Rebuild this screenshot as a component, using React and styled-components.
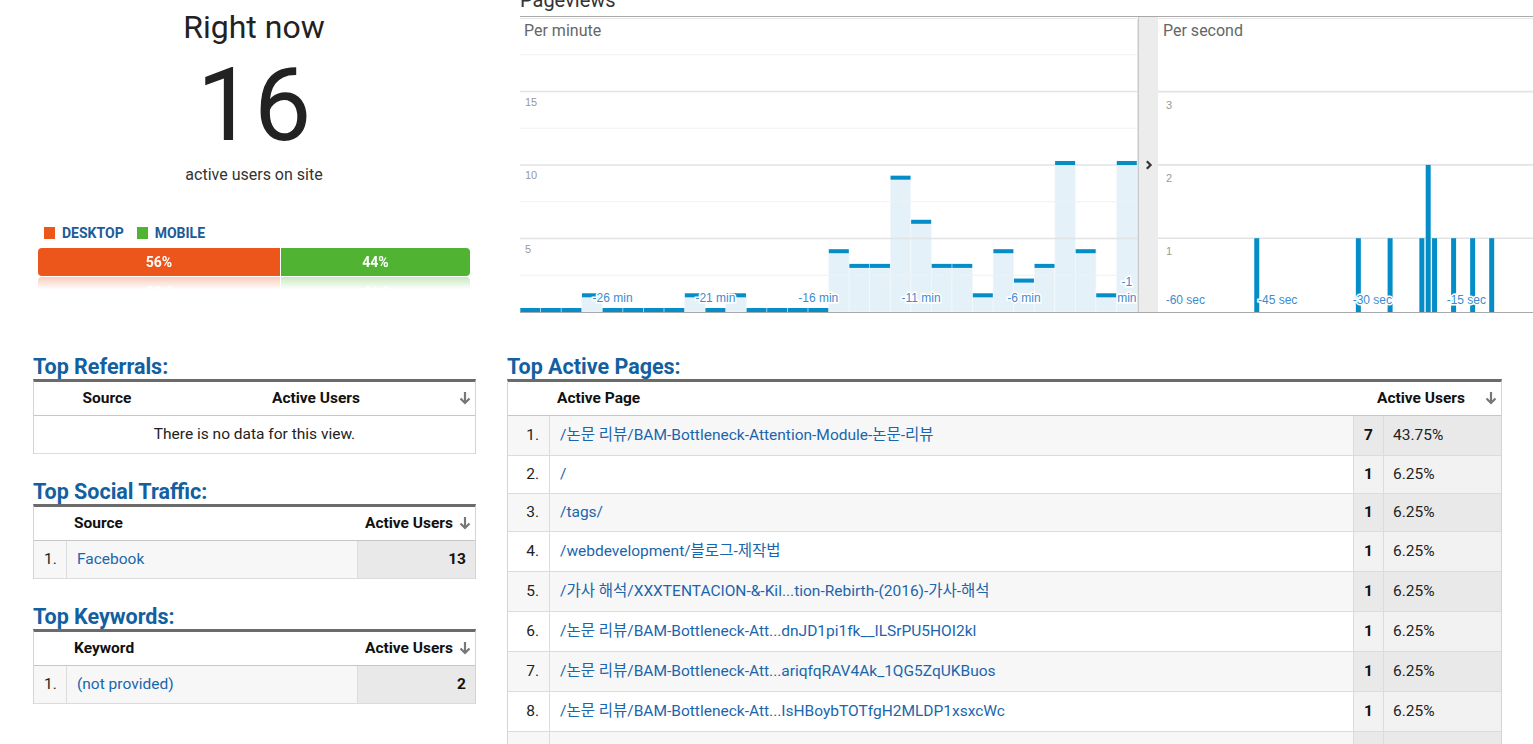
import React from 'react';
import styled, { createGlobalStyle } from 'styled-components';

const BLUE = '#058dc7';

const GlobalStyle = createGlobalStyle`
  html, body {
    margin: 0;
    padding: 0;
    overflow: hidden;
    background: #fff;
  }
  body {
    font-family: Roboto, 'Noto Sans CJK KR', sans-serif;
    color: #222;
  }
`;

const Page = styled.div`
  width: 1533px;
`;

const TopRow = styled.div`
  display: flex;
`;

const Overview = styled.section`
  width: 508px;
  display: flex;
  flex-direction: column;
  align-items: center;
`;

const Headline = styled.h1`
  margin: 8px 0 0;
  font-size: 32px;
  line-height: 38px;
  font-weight: 400;
  color: #222;
`;

const BigCount = styled.div`
  margin-top: 8px;
  font-size: 102px;
  line-height: 102px;
  color: #222;
`;

const Caption = styled.div`
  margin-top: 9px;
  font-size: 16px;
  line-height: 20px;
  color: #333;
`;

const Breakdown = styled.div`
  margin-top: 40px;
  width: 432px;
`;

const Legend = styled.div`
  display: flex;
  gap: 13px;
  padding-left: 6px;
`;

const LegendItem = styled.span`
  display: flex;
  align-items: center;
  gap: 7px;
  font-size: 14px;
  line-height: 16px;
  font-weight: 700;
  color: #1b5c99;
  &::before {
    content: '';
    width: 11px;
    height: 12px;
    background: ${p => p.$color};
  }
`;

const SplitBar = styled.div`
  display: flex;
  margin-top: 7px;
  height: 28px;
  border-radius: 4px;
  overflow: hidden;
  -webkit-box-reflect: below 1px linear-gradient(transparent 55%, rgba(255, 255, 255, 0.3));
`;

const Segment = styled.div`
  flex: 0 0 ${p => p.$share}%;
  display: flex;
  align-items: center;
  justify-content: center;
  background: ${p => p.$color};
  color: #fff;
  font-size: 14px;
  font-weight: 700;
  & + & {
    flex: 1;
    border-left: 1px solid #fff;
  }
`;

const Traffic = styled.section`
  flex: 1;
  min-width: 0;
  padding-left: 12px;
`;

const PanelHeading = styled.h2`
  margin: -12px 0 0;
  padding-bottom: 4px;
  font-size: 20px;
  line-height: 24px;
  font-weight: 400;
  color: #333;
  border-bottom: 1px solid #a9a9a9;
`;

const ChartRow = styled.div`
  display: flex;
  height: 295px;
  border-bottom: 1px solid #a9a9a9;
`;

const ChartPane = styled.div`
  position: relative;
  flex: ${p => (p.$width ? `0 0 ${p.$width}px` : '1')};
  min-width: 0;
  overflow: hidden;
  svg {
    display: block;
  }
`;

const PaneLabel = styled.span`
  position: absolute;
  top: 4px;
  left: 0;
  padding: 0 5px 0 ${p => p.$indent}px;
  background: #fff;
  font-size: 16px;
  line-height: 20px;
  color: #666;
`;

const Divider = styled.div`
  flex: 0 0 20px;
  box-sizing: border-box;
  border-left: 1px solid #c9c9c9;
  background: #ececec;
  display: flex;
  align-items: center;
  justify-content: center;
`;

const BottomRow = styled.div`
  display: flex;
  gap: 31px;
  padding: 42px 0 0 33px;
`;

const Column = styled.div`
  flex: 0 0 ${p => p.$width}px;
  display: flex;
  flex-direction: column;
  gap: 26px;
`;

const BlockTitle = styled.h3`
  margin: 0;
  font-size: 21.5px;
  line-height: 24px;
  font-weight: 700;
  color: #12609f;
`;

const Table = styled.table`
  width: 100%;
  table-layout: fixed;
  border-collapse: separate;
  border-spacing: 0;
  border-top: 3px solid #6b6b6b;
  border-left: 1px solid #d4d4d4;
  border-right: 1px solid #d4d4d4;
  font-size: 15.5px;
  line-height: 17px;
`;

const Col = styled.col`
  width: ${p => p.$w}px;
`;

const Th = styled.th`
  padding: 8px ${p => p.$padR ?? 8}px 8px ${p => p.$padL ?? 8}px;
  text-align: ${p => p.$align || 'left'};
  font-weight: 700;
  color: #111;
  border-bottom: 1px solid #c6c6c6;
  white-space: nowrap;
`;

const Row = styled.tr`
  background: ${p => (p.$odd ? '#f7f7f7' : '#fff')};
`;

const Td = styled.td`
  padding: ${p => (p.$tall ? 11 : 10)}px 10px;
  border-bottom: 1px solid #dcdcdc;
  white-space: nowrap;
  overflow: hidden;
  & + & {
    border-left: 1px solid #dcdcdc;
  }
`;

const EmptyCell = styled(Td)`
  text-align: center;
  background: #fff;
`;

const IndexCell = styled(Td)`
  text-align: right;
  color: #222;
`;

const LinkCell = styled(Td)`
  color: #1a66ad;
`;

const CountCell = styled(Td)`
  text-align: right;
  padding-right: ${p => p.$padR ?? 10}px;
  font-weight: 700;
  color: #111;
  background: ${p => (p.$odd ? '#e9e9e9' : '#f2f2f2')};
`;

const ShareCell = styled(Td)`
  padding-left: 9px;
  color: #222;
  background: ${p => (p.$odd ? '#e9e9e9' : '#f2f2f2')};
`;

const SortIcon = styled.svg`
  width: 12px;
  height: 14px;
  margin-left: ${p => p.$gap}px;
  vertical-align: -2px;
`;

const SortArrow = ({ gap = 6 }) => (
  <SortIcon $gap={gap} viewBox="0 0 12 14">
    <path d="M6 1v11M1.5 7.5L6 12l4.5-4.5" fill="none" stroke="#777" strokeWidth="2.2" />
  </SortIcon>
);

// per-minute chart
const perMinute = [0, 0, 0, 1, 0, 0, 0, 0, 1, 0, 1, 0, 0, 0, 0, 4, 3, 3, 9, 6, 3, 3, 1, 4, 2, 3, 10, 4, 1, 10];
const BAR = 20.57;
const BASE = 295;
const UNIT = 14.7;
const minuteTicks = { 4: '-26 min', 9: '-21 min', 14: '-16 min', 19: '-11 min', 24: '-6 min' };

const axisText = {
  fontFamily: "'Liberation Sans', Arial, sans-serif",
};

const MinuteChart = () => (
  <svg width="618" height="295">
    <line x1="0" x2="617" y1="1.5" y2="1.5" stroke="#e6e6e6" />
    {perMinute.map((v, i) =>
      v > 0 ? (
        <rect key={i} x={i * BAR} y={BASE - v * UNIT - 4} width={BAR} height={v * UNIT + 4} fill="#e5f1f9" stroke="#f4f9fc" strokeWidth="0.6" />
      ) : null
    )}
    {[2.5, 5, 7.5, 10, 12.5, 15, 17.5].map(v => (
      <line
        key={v}
        x1="0"
        x2="617"
        y1={BASE - v * UNIT}
        y2={BASE - v * UNIT}
        stroke={v % 5 === 0 ? '#e3e3e3' : '#f1f1f1'}
        strokeWidth={v % 5 === 0 ? 1.6 : 1.2}
      />
    ))}
    {[5, 10, 15].map(v => (
      <text key={v} x="5" y={BASE - v * UNIT + 14} fontSize="11" fill="#999" style={axisText}>
        {v}
      </text>
    ))}
    {perMinute.map((v, i) => (
      <rect key={i} x={i * BAR + 0.3} y={BASE - v * UNIT - 4} width={BAR - 0.6} height="4" fill={BLUE} />
    ))}
    <g fontSize="12" fill="#3d8bd0" stroke="#fff" strokeWidth="3" paintOrder="stroke" textAnchor="middle" style={axisText}>
      {Object.entries(minuteTicks).map(([i, label]) => (
        <text key={i} x={Number(i) * BAR + BAR / 2} y="285">
          {label}
        </text>
      ))}
      <text x={29 * BAR + BAR / 2} y="268.5">-1</text>
      <text x={29 * BAR + BAR / 2} y="285">min</text>
    </g>
    <line x1="617.5" x2="617.5" y1="2" y2="295" stroke="#e4e4e4" />
  </svg>
);

// per-second chart
const perSecond = [
  [15, 1], [31, 1], [36, 1], [41, 1], [42, 2], [43, 1], [46, 1], [49, 1], [52, 1],
];
const SEC = 6.35;
const SEC_BASE = 294.5;
const SEC_UNIT = 73.3;
const secondTicks = [[7.7, '-60 sec'], [100, '-45 sec'], [194.7, '-30 sec'], [288.7, '-15 sec']];

const SecondChart = () => (
  <svg width="382" height="295">
    <line x1="0" x2="382" y1="1.5" y2="1.5" stroke="#e6e6e6" />
    {[1, 2, 3].map(v => (
      <line key={v} x1="0" x2="382" y1={SEC_BASE - v * SEC_UNIT} y2={SEC_BASE - v * SEC_UNIT} stroke="#e3e3e3" strokeWidth="1.6" />
    ))}
    {[1, 2, 3].map(v => (
      <text key={v} x="8" y={SEC_BASE - v * SEC_UNIT + 17} fontSize="11" fill="#999" style={axisText}>
        {v}
      </text>
    ))}
    {perSecond.map(([k, v]) => (
      <rect key={k} x={1 + k * SEC} y={SEC_BASE - v * SEC_UNIT} width="5" height={295 - (SEC_BASE - v * SEC_UNIT)} fill={BLUE} />
    ))}
    <g fontSize="12" fill="#3d8bd0" stroke="#fff" strokeWidth="3" paintOrder="stroke" style={axisText}>
      {secondTicks.map(([x, label]) => (
        <text key={label} x={x} y="286.5">
          {label}
        </text>
      ))}
    </g>
  </svg>
);

const pages = [
  ['/논문 리뷰/BAM-Bottleneck-Attention-Module-논문-리뷰', 7, '43.75%'],
  ['/', 1, '6.25%'],
  ['/tags/', 1, '6.25%'],
  ['/webdevelopment/블로그-제작법', 1, '6.25%'],
  ['/가사 해석/XXXTENTACION-&-Kil...tion-Rebirth-(2016)-가사-해석', 1, '6.25%'],
  ['/논문 리뷰/BAM-Bottleneck-Att...dnJD1pi1fk__ILSrPU5HOI2kl', 1, '6.25%'],
  ['/논문 리뷰/BAM-Bottleneck-Att...ariqfqRAV4Ak_1QG5ZqUKBuos', 1, '6.25%'],
  ['/논문 리뷰/BAM-Bottleneck-Att...IsHBoybTOTfgH2MLDP1xsxcWc', 1, '6.25%'],
  ['/about/', 1, '6.25%'],
  ['/categories/', 1, '6.25%'],
];

const hasHangul = text => /[\uac00-\ud7a3]/.test(text);

const RankedTable = ({ label, rows }) => (
  <Table>
    <colgroup>
      <Col $w={32} />
      <Col $w={291} />
      <Col $w={118} />
    </colgroup>
    <thead>
      <tr>
        <Th />
        <Th>{label}</Th>
        <Th $align="right" $padR={4}>
          Active Users
          <SortArrow />
        </Th>
      </tr>
    </thead>
    <tbody>
      {rows.map(([name, count], i) => (
        <Row key={name} $odd={i % 2 === 0}>
          <IndexCell>{i + 1}.</IndexCell>
          <LinkCell>{name}</LinkCell>
          <CountCell $odd={i % 2 === 0} $padR={9}>
            {count}
          </CountCell>
        </Row>
      ))}
    </tbody>
  </Table>
);

export default function App() {
  return (
    <Page>
      <GlobalStyle />
      <TopRow>
        <Overview>
          <Headline>Right now</Headline>
          <BigCount>16</BigCount>
          <Caption>active users on site</Caption>
          <Breakdown>
            <Legend>
              <LegendItem $color="#ed561b">DESKTOP</LegendItem>
              <LegendItem $color="#50b432">MOBILE</LegendItem>
            </Legend>
            <SplitBar>
              <Segment $share={56} $color="#ed561b">56%</Segment>
              <Segment $share={44} $color="#50b432">44%</Segment>
            </SplitBar>
          </Breakdown>
        </Overview>

        <Traffic>
          <PanelHeading>Pageviews</PanelHeading>
          <ChartRow>
            <ChartPane $width={618}>
              <MinuteChart />
              <PaneLabel $indent={4}>Per minute</PaneLabel>
            </ChartPane>
            <Divider>
              <svg width="8" height="10" viewBox="0 0 8 10">
                <path d="M1.8 1.2L5.6 5 1.8 8.8" fill="none" stroke="#333" strokeWidth="2.2" />
              </svg>
            </Divider>
            <ChartPane>
              <SecondChart />
              <PaneLabel $indent={5}>Per second</PaneLabel>
            </ChartPane>
          </ChartRow>
        </Traffic>
      </TopRow>

      <BottomRow>
        <Column $width={443}>
          <section>
            <BlockTitle>Top Referrals:</BlockTitle>
            <Table>
              <colgroup>
                <Col $w={146} />
                <Col $w={272} />
                <Col $w={23} />
              </colgroup>
              <thead>
                <tr>
                  <Th $align="center">Source</Th>
                  <Th $align="center">Active Users</Th>
                  <Th $padL={0} $padR={4} $align="right">
                    <SortArrow gap={0} />
                  </Th>
                </tr>
              </thead>
              <tbody>
                <tr>
                  <EmptyCell colSpan={3}>There is no data for this view.</EmptyCell>
                </tr>
              </tbody>
            </Table>
          </section>

          <section>
            <BlockTitle>Top Social Traffic:</BlockTitle>
            <RankedTable label="Source" rows={[['Facebook', 13]]} />
          </section>

          <section>
            <BlockTitle>Top Keywords:</BlockTitle>
            <RankedTable label="Keyword" rows={[['(not provided)', 2]]} />
          </section>
        </Column>

        <Column $width={995}>
          <section>
            <BlockTitle>Top Active Pages:</BlockTitle>
            <Table>
              <colgroup>
                <Col $w={41} />
                <Col $w={804} />
                <Col $w={30} />
                <Col $w={118} />
              </colgroup>
              <thead>
                <tr>
                  <Th />
                  <Th>Active Page</Th>
                  <Th colSpan={2} $align="right" $padR={4}>
                    Active Users
                    <SortArrow gap={20} />
                  </Th>
                </tr>
              </thead>
              <tbody>
                {pages.map(([path, count, share], i) => {
                  const odd = i % 2 === 0;
                  const tall = hasHangul(path);
                  return (
                    <Row key={path} $odd={odd}>
                      <IndexCell $tall={tall}>{i + 1}.</IndexCell>
                      <LinkCell $tall={tall}>{path}</LinkCell>
                      <CountCell $tall={tall} $odd={odd} $padR={11}>
                        {count}
                      </CountCell>
                      <ShareCell $tall={tall} $odd={odd}>
                        {share}
                      </ShareCell>
                    </Row>
                  );
                })}
              </tbody>
            </Table>
          </section>
        </Column>
      </BottomRow>
    </Page>
  );
}
